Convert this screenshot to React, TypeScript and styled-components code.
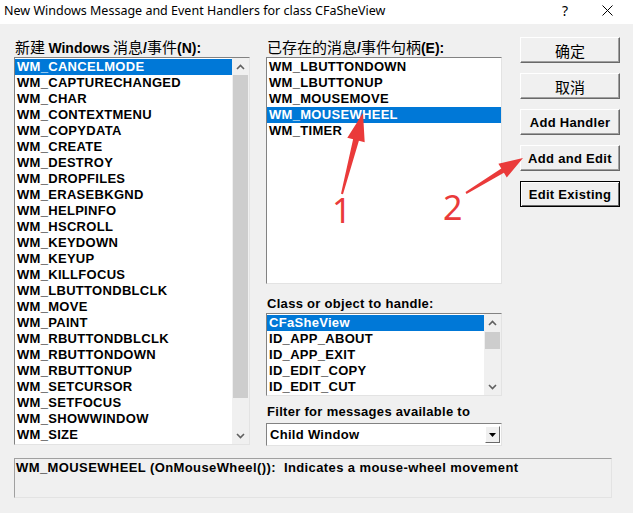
import React from 'react'
import styled, { createGlobalStyle } from 'styled-components'

const GlobalStyle = createGlobalStyle`
  html, body {
    margin: 0;
    padding: 0;
    background: #f0f0f0;
  }
`

const Window = styled.div`
  position: relative;
  width: 633px;
  height: 513px;
  overflow: hidden;
  background: #f0f0f0;
  font-family: 'Liberation Sans', Arial, sans-serif;
  color: #000;
`

const TitleBar = styled.div`
  height: 24px;
  background: #fff;
  display: flex;
  align-items: center;
  padding-left: 4px;
  font-family: 'Noto Sans', sans-serif;
  font-size: 12.5px;
  color: #000;

  .title {
    flex: 1;
    margin-top: -3px;
  }
  .help {
    width: 20px;
    font-size: 14px;
    margin-right: 22px;
    margin-top: -3px;
    text-align: center;
  }
  .close {
    width: 20px;
    margin-right: 16px;
    display: flex;
    justify-content: center;
    margin-top: -3px;
  }
`

const Body = styled.div`
  padding: 13px 13px 0 14px;
`

const Top = styled.div`
  display: flex;
  align-items: flex-start;
`

const Column = styled.div<{ $gap?: number }>`
  width: 236px;
  display: flex;
  flex-direction: column;
  margin-left: ${(p) => p.$gap || 0}px;
`

const Label = styled.div<{ $top?: number }>`
  height: 20px;
  line-height: 20px;
  margin-top: ${(p) => p.$top || 0}px;
  padding-left: 1px;
  font-family: 'Noto Sans CJK SC', sans-serif;
  font-size: 15px;
  white-space: nowrap;
`

const Latin = styled.span`
  font-family: 'Liberation Sans', Arial, sans-serif;
  font-weight: bold;
  font-size: 14px;
`

const EnLabel = styled.div<{ $top?: number }>`
  height: 19px;
  line-height: 19px;
  margin-top: ${(p) => p.$top || 0}px;
  padding-left: 1px;
  font-weight: bold;
  font-size: 13px;
  letter-spacing: 0.3px;
  white-space: nowrap;
`

const ListBox = styled.div<{ $height: number }>`
  height: ${(p) => p.$height}px;
  box-sizing: border-box;
  background: #fff;
  border: 1px solid;
  border-color: #828282 #e3e3e3 #e3e3e3 #828282;
  display: flex;
  overflow: hidden;
`

const Items = styled.div`
  flex: 1;
  padding: 1px 0 0 0;
  display: flex;
  flex-direction: column;
`

const Item = styled.div<{ $selected?: boolean }>`
  height: 16px;
  line-height: 16px;
  padding-left: 2px;
  font-weight: bold;
  font-size: 13px;
  letter-spacing: 0.3px;
  white-space: nowrap;
  background: ${(p) => (p.$selected ? '#0078d7' : 'transparent')};
  color: ${(p) => (p.$selected ? '#fff' : '#000')};
`

const ScrollBar = styled.div`
  width: 17px;
  background: #f0f0f0;
  display: flex;
  flex-direction: column;
`

const ScrollArrow = styled.div`
  height: 17px;
  display: flex;
  align-items: center;
  justify-content: center;
`

const Track = styled.div`
  flex: 1;
  display: flex;
  flex-direction: column;
`

const Thumb = styled.div`
  margin: 0 1px;
  background: #cdcdcd;
`

const ComboBox = styled.div`
  margin-top: 2px;
  height: 23px;
  box-sizing: border-box;
  background: #fff;
  border: 1px solid;
  border-color: #828282 #e3e3e3 #e3e3e3 #828282;
  display: flex;
  align-items: center;
  padding: 1px;

  .value {
    flex: 1;
    padding-left: 2px;
    font-weight: bold;
    font-size: 13px;
    letter-spacing: 0.3px;
  }
`

const DropButton = styled.div`
  width: 15px;
  height: 17px;
  box-sizing: border-box;
  background: #f0f0f0;
  border: 1px solid;
  border-color: #fff #696969 #696969 #fff;
  display: flex;
  align-items: center;
  justify-content: center;
`

const ButtonColumn = styled.div`
  margin-left: 18px;
  width: 100px;
  display: flex;
  flex-direction: column;
  gap: 10px;
`

const Button = styled.div<{ $default?: boolean; $cjk?: boolean }>`
  height: 26px;
  box-sizing: border-box;
  background: #f0f0f0;
  border: 1px solid;
  border-color: ${(p) => (p.$default ? '#000' : '#fff #696969 #696969 #fff')};
  box-shadow: ${(p) =>
    p.$default
      ? 'inset 1px 1px 0 #fff, inset -1px -1px 0 #696969'
      : 'inset -1px -1px 0 #a0a0a0'};
  display: flex;
  align-items: center;
  justify-content: center;
  font-family: ${(p) =>
    p.$cjk ? "'Noto Sans CJK SC', sans-serif" : "'Liberation Sans', Arial, sans-serif"};
  font-weight: ${(p) => (p.$cjk ? 'normal' : 'bold')};
  font-size: ${(p) => (p.$cjk ? '15px' : '13px')};
  letter-spacing: ${(p) => (p.$cjk ? '0' : '0.3px')};
`

const Description = styled.div`
  margin: 12px 8px 0 0;
  height: 40px;
  box-sizing: border-box;
  border: 1px solid;
  border-color: #a0a0a0 #e3e3e3 #e3e3e3 #a0a0a0;
  padding: 1px 0 0 1px;
  line-height: 16px;
  font-size: 13px;
  font-weight: bold;
  letter-spacing: 0.4px;
  white-space: nowrap;
`

const Overlay = styled.svg`
  position: absolute;
  left: 0;
  top: 0;
  pointer-events: none;
`

const Marker = styled.div<{ $x: number; $y: number }>`
  position: absolute;
  left: ${(p) => p.$x}px;
  top: ${(p) => p.$y}px;
  font-family: 'Noto Sans', sans-serif;
  font-size: 34px;
  line-height: 34px;
  color: #ea3a3a;
`

const Chevron = ({ up }: { up?: boolean }) => (
  <svg width="9" height="6" viewBox="0 0 9 6">
    <polyline
      points={up ? '1,5 4.5,1.5 8,5' : '1,1 4.5,4.5 8,1'}
      fill="none"
      stroke="#606060"
      strokeWidth="1.6"
    />
  </svg>
)

const Scroller = ({ offset, size }: { offset: number; size: number }) => (
  <ScrollBar>
    <ScrollArrow>
      <Chevron up />
    </ScrollArrow>
    <Track>
      <Thumb style={{ marginTop: offset, height: size }} />
    </Track>
    <ScrollArrow>
      <Chevron />
    </ScrollArrow>
  </ScrollBar>
)

const messages = [
  'WM_CANCELMODE',
  'WM_CAPTURECHANGED',
  'WM_CHAR',
  'WM_CONTEXTMENU',
  'WM_COPYDATA',
  'WM_CREATE',
  'WM_DESTROY',
  'WM_DROPFILES',
  'WM_ERASEBKGND',
  'WM_HELPINFO',
  'WM_HSCROLL',
  'WM_KEYDOWN',
  'WM_KEYUP',
  'WM_KILLFOCUS',
  'WM_LBUTTONDBLCLK',
  'WM_MOVE',
  'WM_PAINT',
  'WM_RBUTTONDBLCLK',
  'WM_RBUTTONDOWN',
  'WM_RBUTTONUP',
  'WM_SETCURSOR',
  'WM_SETFOCUS',
  'WM_SHOWWINDOW',
  'WM_SIZE',
]

const existing = ['WM_LBUTTONDOWN', 'WM_LBUTTONUP', 'WM_MOUSEMOVE', 'WM_MOUSEWHEEL', 'WM_TIMER']

const classes = ['CFaSheView', 'ID_APP_ABOUT', 'ID_APP_EXIT', 'ID_EDIT_COPY', 'ID_EDIT_CUT']

export default function App() {
  return (
    <Window>
      <GlobalStyle />
      <TitleBar>
        <span className="title">New Windows Message and Event Handlers for class CFaSheView</span>
        <span className="help">?</span>
        <span className="close">
          <svg width="11" height="11" viewBox="0 0 11 11">
            <path d="M0.5 0.5 L10.5 10.5 M10.5 0.5 L0.5 10.5" stroke="#000" strokeWidth="1" />
          </svg>
        </span>
      </TitleBar>
      <Body>
        <Top>
          <Column>
            <Label>
              新建 <Latin>Windows</Latin> 消息<Latin>/</Latin>事件<Latin>(N):</Latin>
            </Label>
            <ListBox $height={388}>
              <Items>
                {messages.map((m, i) => (
                  <Item key={m} $selected={i === 0}>
                    {m}
                  </Item>
                ))}
              </Items>
              <Scroller offset={0} size={323} />
            </ListBox>
          </Column>
          <Column $gap={16}>
            <Label>
              已存在的消息<Latin>/</Latin>事件句柄<Latin>(E):</Latin>
            </Label>
            <ListBox $height={227}>
              <Items>
                {existing.map((m, i) => (
                  <Item key={m} $selected={i === 3}>
                    {m}
                  </Item>
                ))}
              </Items>
            </ListBox>
            <EnLabel $top={10}>Class or object to handle:</EnLabel>
            <ListBox $height={83}>
              <Items>
                {classes.map((m, i) => (
                  <Item key={m} $selected={i === 0}>
                    {m}
                  </Item>
                ))}
              </Items>
              <Scroller offset={1} size={17} />
            </ListBox>
            <EnLabel $top={6}>Filter for messages available to</EnLabel>
            <ComboBox>
              <span className="value">Child Window</span>
              <DropButton>
                <svg width="7" height="4" viewBox="0 0 7 4">
                  <polygon points="0,0 7,0 3.5,4" fill="#000" />
                </svg>
              </DropButton>
            </ComboBox>
          </Column>
          <ButtonColumn>
            <Button $cjk>确定</Button>
            <Button $cjk>取消</Button>
            <Button>Add Handler</Button>
            <Button>Add and Edit</Button>
            <Button $default>Edit Existing</Button>
          </ButtonColumn>
        </Top>
        <Description>WM_MOUSEWHEEL (OnMouseWheel()):&nbsp; Indicates a mouse-wheel movement</Description>
      </Body>
      <Overlay width="633" height="513" viewBox="0 0 633 513">
        <polygon
          points="341,193.8 353.1,139.3 347.3,137.7 363,113 364.7,142.3 358.9,140.8 343,194.3"
          fill="#ea3a3a"
        />
        <polygon
          points="465.5,192.1 501.3,168.5 498.4,163.8 523,158 506.8,177.4 503.9,172.7 466.5,193.9"
          fill="#ea3a3a"
        />
      </Overlay>
      <Marker $x={332} $y={193}>1</Marker>
      <Marker $x={443} $y={190}>2</Marker>
    </Window>
  )
}
